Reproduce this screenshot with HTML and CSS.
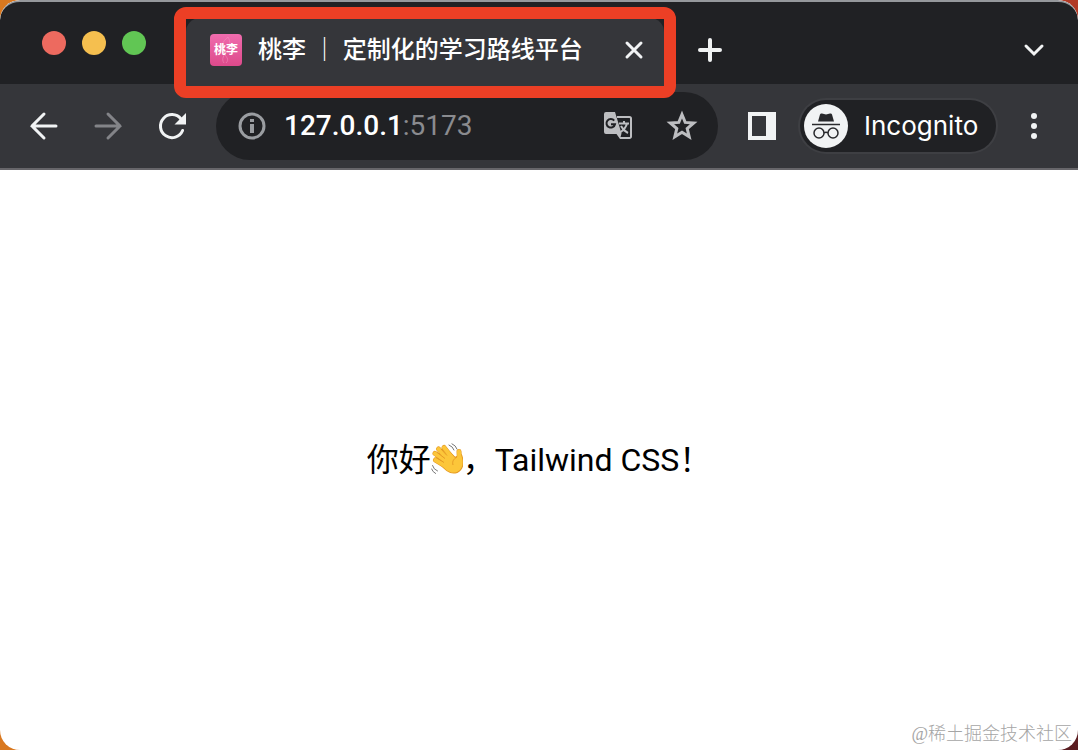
FILE: index.html
```html
<!DOCTYPE html>
<html lang="zh-CN">
<head>
    <meta charset="UTF-8">
    <meta name="viewport" content="width=device-width, initial-scale=1.0">
    <title>桃李 ｜ 定制化的学习路线平台</title>
    <link rel="stylesheet" href="styles.css">
</head>
<body>
    <div class="window">
        <header class="tab-strip">
            <div class="lights">
                <button class="light light-close" aria-label="Close window"></button>
                <button class="light light-minimize" aria-label="Minimize window"></button>
                <button class="light light-zoom" aria-label="Zoom window"></button>
            </div>
            <div class="tab">
                <span class="favicon">
                    <svg class="favicon-leaf" viewBox="0 0 32 32" aria-hidden="true">
                        <path d="M18 3C12 8 10 13 13 18s7 7 3 11M18 3c3 5 2 10-1 14s-6 8-3 12"/>
                    </svg>
                    <span class="favicon-text">桃李</span>
                </span>
                <span class="tab-title">桃李 ｜ 定制化的学习路线平台</span>
                <button class="icon-button tab-close" aria-label="Close tab">
                    <svg viewBox="0 0 32 32"><path class="line" d="M9 9l14 14M23 9L9 23"/></svg>
                </button>
            </div>
            <button class="icon-button new-tab" aria-label="New tab">
                <svg viewBox="0 0 32 32"><path class="line bold" d="M16 6v20M6 16h20"/></svg>
            </button>
            <button class="icon-button tab-search" aria-label="Search tabs">
                <svg viewBox="0 0 32 32"><path class="line" d="M8 12l8 8 8-8"/></svg>
            </button>
        </header>

        <nav class="toolbar">
            <div class="nav-buttons">
                <button class="icon-button" aria-label="Back">
                    <svg viewBox="0 0 32 32"><path class="line" d="M28 16H4M16 4L4 16l12 12"/></svg>
                </button>
                <button class="icon-button muted" aria-label="Forward" disabled>
                    <svg viewBox="0 0 32 32"><path class="line" d="M4 16h24M16 4l12 12-12 12"/></svg>
                </button>
                <button class="icon-button" aria-label="Reload">
                    <svg viewBox="0 0 32 32">
                        <path class="line" d="M26.600 20.500A11.500 11.500 0 1 1 25 9"/>
                        <path class="solid" d="M30 3v11.500H18.500z"/>
                    </svg>
                </button>
            </div>

            <div class="address-bar">
                <button class="icon-button site-info" aria-label="View site information">
                    <svg viewBox="0 0 32 32">
                        <circle class="line" cx="16" cy="16" r="12"/>
                        <path class="solid" d="M14 9h4v3h-4zM14 14h4v9h-4z"/>
                    </svg>
                </button>
                <span class="url">127.0.0.1<span class="port">:5173</span></span>
                <button class="icon-button soft" aria-label="Translate this page">
                    <svg viewBox="0 0 32 32">
                        <path class="thin" d="M15 7h12.500a1.500 1.500 0 0 1 1.500 1.500v18a1.500 1.500 0 0 1-1.500 1.500H18"/>
                        <path class="solid" d="M4 2h9l6.500 21.500L18 29l-3.500-5H4a2 2 0 0 1-2-2V4a2 2 0 0 1 2-2z"/>
                        <path class="cut" d="M12.200 10.600A4.300 4.300 0 1 0 13 14.200H9"/>
                        <path class="thin" d="M17 13.500h10M22 11v2.500M25 13.500c-1 4-4 7-7 9M19 16c1.500 3 4 5.500 7 7"/>
                    </svg>
                </button>
                <button class="icon-button soft" aria-label="Bookmark this tab">
                    <svg viewBox="0 0 32 32">
                        <path class="star" d="M16 4.500l3.200 7.900 8.500.6-6.500 5.500 2 8.300-7.200-4.500-7.200 4.500 2-8.300L4.300 13l8.500-.6z"/>
                    </svg>
                </button>
            </div>

            <button class="icon-button side-panel" aria-label="Show side panel">
                <svg viewBox="0 0 32 32"><path class="solid" fill-rule="evenodd" d="M2 2h28v28H2zM6 6v20h14V6z"/></svg>
            </button>

            <button class="profile">
                <svg class="profile-icon" viewBox="0 0 44 44" aria-hidden="true">
                    <circle class="profile-disc" cx="22" cy="22" r="22"/>
                    <path class="hat" d="M18 9.500l4 1 4-1q1.500-.5 2 1L30 17.500H14l2-7q.5-1.500 2-1z"/>
                    <path class="glasses" d="M8 20.500h28"/>
                    <circle class="glasses" cx="15" cy="29" r="5"/>
                    <circle class="glasses" cx="29" cy="29" r="5"/>
                    <path class="glasses" d="M20 29q2-1.500 4 0"/>
                </svg>
                <span>Incognito</span>
            </button>

            <button class="icon-button menu" aria-label="Menu">
                <svg viewBox="0 0 32 32">
                    <circle class="solid" cx="16" cy="6" r="3"/>
                    <circle class="solid" cx="16" cy="16" r="3"/>
                    <circle class="solid" cx="16" cy="26" r="3"/>
                </svg>
            </button>
        </nav>

        <main class="page">
            <p class="greeting">你好<svg class="wave" viewBox="0 0 32 32" role="img" aria-label="👋">
                <path class="hand-edge" d="M16 24L4.500 17M18 20L4 10.500M19 18L7.500 6M22 16L13 4.500M28.500 18L28 8.500"/>
                <path class="palm-edge" d="M11 14L18 9l6 6 6-3c3 7 2 14-4 17-6 2-11-1-16-8z"/>
                <path class="hand" d="M16 24L4.500 17M18 20L4 10.500M19 18L7.500 6M22 16L13 4.500M28.500 18L28 8.500"/>
                <path class="palm" d="M11 14L18 9l6 6 6-3c3 7 2 14-4 17-6 2-11-1-16-8z"/>
                <path class="crease" d="M14 15.500L5.500 9M16 12.500l-6-6.500M13 19.500L4.500 14M26 14c-3.500 2-5 4.500-4 8"/>
                <path class="motion" d="M18 2q4 1.500 5 5M21 .8q4 1.700 5 5.200M1.500 22.500q1 4 5 5.500M.6 26q1 3 4 4.500"/>
            </svg>，Tailwind CSS！</p>
        </main>

        <footer class="watermark">@稀土掘金技术社区</footer>
    </div>
</body>
</html>
```

FILE: styles.css
```css
* {
    box-sizing: border-box;
}

body {
    margin: 0;
    background: linear-gradient(90deg, #d9781f 50%, transparent 50%), linear-gradient(#b23a26, #5a1d22);
    font-family: Inter, "Noto Sans CJK SC", sans-serif;
    color: #000;
}

button {
    padding: 0;
    border: none;
    background: none;
    color: inherit;
    font: inherit;
    cursor: pointer;
}

.window {
    display: flex;
    flex-direction: column;
    min-height: 100vh;
    border-radius: 20px;
    background-color: #fff;
    overflow: hidden;
}

/* Tab strip */
.tab-strip {
    display: flex;
    align-items: flex-start;
    height: 84px;
    padding: 16px 28px 0 42px;
    border-top: 2px solid #95989c;
    border-radius: 20px 20px 0 0;
    background-color: #202124;
    color: #fff;
}

.lights {
    display: flex;
    gap: 16px;
    margin: 13px 40px 0 0;
}

.light {
    width: 24px;
    height: 24px;
    border-radius: 50%;
}

.light-close {
    background-color: #ed6a5f;
}

.light-minimize {
    background-color: #f5bf4f;
}

.light-zoom {
    background-color: #61c654;
}

.tab {
    position: relative;
    display: flex;
    align-items: center;
    width: 478px;
    height: 66px;
    padding: 0 14px 2px 24px;
    border-radius: 14px 14px 0 0;
    background-color: #35363a;
}

/* Red frame around the active tab */
.tab::after {
    content: "";
    position: absolute;
    inset: -11px -12px -14px;
    border: 12px solid #ec3f25;
    border-radius: 12px;
    pointer-events: none;
}

.favicon {
    position: relative;
    display: flex;
    align-items: center;
    justify-content: center;
    width: 32px;
    height: 32px;
    border-radius: 4px;
    background: linear-gradient(#f06cae, #dd4a8b);
}

.favicon-leaf {
    position: absolute;
    inset: 0;
    fill: none;
    stroke: #f59bc5;
    opacity: 0.5;
}

.favicon-text {
    position: relative;
    font-size: 12px;
    font-weight: 700;
    line-height: 16px;
}

.tab-title {
    flex: 1;
    margin-left: 16px;
    font-size: 24px;
    font-weight: 500;
    line-height: 32px;
    white-space: nowrap;
}

.icon-button {
    flex: none;
    width: 32px;
    height: 32px;
    color: #f1f3f4;
}

.icon-button svg {
    display: block;
}

.line {
    fill: none;
    stroke: currentColor;
    stroke-width: 3;
    stroke-linecap: round;
}

.bold {
    stroke-width: 4;
}

.thin {
    fill: none;
    stroke: currentColor;
    stroke-width: 2;
}

.solid {
    fill: currentColor;
}

.cut {
    fill: none;
    stroke: #202124;
    stroke-width: 2;
}

.star {
    fill: none;
    stroke: currentColor;
    stroke-width: 3;
}

.new-tab {
    margin: 16px auto 0 30px;
}

.tab-search {
    margin-top: 16px;
}

/* Toolbar */
.toolbar {
    display: flex;
    align-items: center;
    height: 86px;
    padding: 0 28px;
    border-bottom: 2px solid #67666a;
    background-color: #35363a;
}

.nav-buttons {
    display: flex;
    gap: 32px;
    margin-right: 28px;
}

.muted {
    color: #838488;
}

.address-bar {
    display: flex;
    flex: 1;
    align-items: center;
    gap: 32px;
    height: 68px;
    padding: 0 20px;
    border-radius: 34px;
    background-color: #202124;
}

.site-info {
    color: #9a9da1;
}

.soft {
    color: #bdbec1;
}

.url {
    flex: 1;
    margin-left: -16px;
    color: #fff;
    font-family: Roboto, sans-serif;
    font-size: 28px;
    font-weight: 500;
    line-height: 32px;
}

.port {
    color: #8a8b8f;
    font-weight: 400;
}

.side-panel {
    margin: 0 22px 0 28px;
}

.profile {
    display: flex;
    align-items: center;
    gap: 16px;
    width: 196px;
    height: 52px;
    padding-left: 4px;
    border-radius: 26px;
    background-color: #202124;
    box-shadow: 0 0 0 2px #3e3f43;
    color: #fff;
    font-size: 26px;
    line-height: 32px;
}

.profile-icon {
    width: 44px;
    height: 44px;
}

.profile-disc {
    fill: #f1f3f4;
}

.hat {
    fill: #28292c;
}

.glasses {
    fill: none;
    stroke: #28292c;
    stroke-width: 1.5;
}

.menu {
    margin-left: 22px;
}

/* Page content */
.page {
    display: flex;
    flex: 1;
    align-items: center;
    justify-content: center;
    padding-top: 32px;
}

.greeting {
    margin: 0;
    font-family: Roboto, "Noto Sans CJK SC", sans-serif;
    font-size: 32px;
    line-height: 48px;
}

.wave {
    width: 32px;
    height: 32px;
    vertical-align: -4px;
}

.hand-edge,
.hand,
.palm-edge,
.palm {
    fill: none;
    stroke-linecap: round;
    stroke-linejoin: round;
}

.hand-edge {
    stroke: #e59a25;
    stroke-width: 5;
}

.palm-edge {
    stroke: #e59a25;
    stroke-width: 2;
}

.hand {
    stroke: #fcc63a;
    stroke-width: 4;
}

.palm {
    fill: #fcc63a;
}

.crease {
    fill: none;
    stroke: #e59a25;
}

.motion {
    fill: none;
    stroke: #777;
    stroke-linecap: round;
}

.watermark {
    padding-right: 6px;
    color: #a5a5a5;
    font-family: "Liberation Serif", "Noto Sans CJK SC", serif;
    font-size: 18px;
    font-weight: 300;
    line-height: 32px;
    text-align: right;
}
```
